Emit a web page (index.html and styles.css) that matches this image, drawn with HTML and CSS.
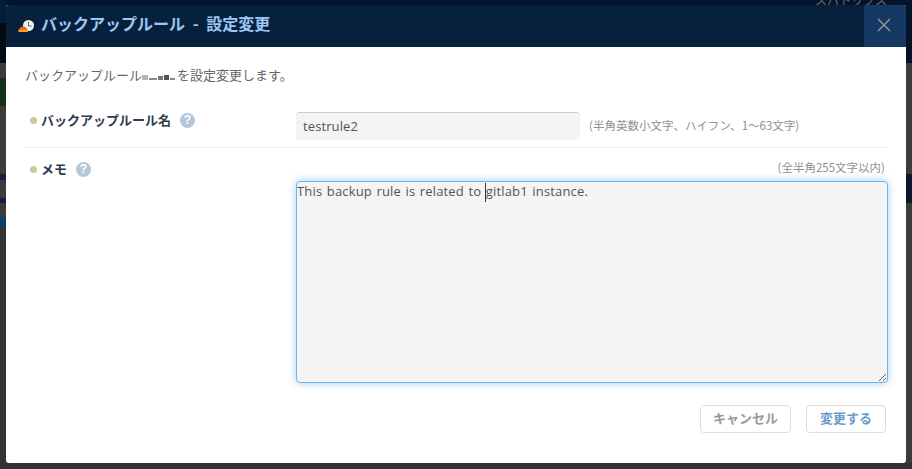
FILE: index.html
```html
<!DOCTYPE html>
<html lang="ja">
<head>
<meta charset="utf-8">
<title>バックアップルール - 設定変更</title>
<link rel="stylesheet" href="styles.css">
</head>
<body>
<div class="backdrop">
  <div class="strip">
    <div class="band l-navy"></div>
    <div class="band l-black"></div>
    <div class="band l-grey1"></div>
    <div class="band l-green"></div>
    <div class="band l-grey2"></div>
    <div class="band l-stripe1"></div>
    <div class="band l-grey3"></div>
    <div class="band l-stripe2"></div>
    <div class="band l-grey4"></div>
    <div class="band l-blue"></div>
  </div>
  <div class="strip">
    <div class="band r-dark"></div>
    <div class="band r-grey1"></div>
    <div class="band r-navy"></div>
    <div class="band r-grey2"></div>
  </div>
</div>
<span class="bg-text">スパトリクス</span>
<main class="modal">
  <header class="modal-head">
    <svg class="head-icon" width="24" height="24" viewBox="0 0 24 24" aria-hidden="true">
      <circle cx="12.5" cy="10.5" r="5.5" fill="#f2f2f2"/>
      <path d="M12.5 7V11H15.5" fill="none" stroke="#5b5f66" stroke-width="1"/>
      <path d="M2 17C2.2 14 4.5 11.5 7.5 11.5C10 11.5 11.8 14 12 17Z" fill="#ef6f18"/>
      <rect x="3.5" y="15" width="8" height="2" fill="#f9a825"/>
    </svg>
    <h1 class="modal-title">バックアップルール - 設定変更</h1>
    <button class="close" aria-label="閉じる">
      <svg width="14" height="14" viewBox="0 0 14 14"><path d="M1 1L13 13M13 1L1 13" stroke="#8c949c" stroke-width="1.5" fill="none"/></svg>
    </button>
  </header>
  <section class="modal-body">
    <p class="intro">バックアップルール<span class="mask"><i></i><i></i><i></i><i></i><i></i></span>を設定変更します。</p>
    <div class="row row-name">
      <div class="label"><span class="dot"></span><b>バックアップルール名</b><span class="help">?</span></div>
      <div class="field-line">
        <input class="input" value="testrule2" readonly>
        <span class="hint">(半角英数小文字、ハイフン、1～63文字)</span>
      </div>
    </div>
    <div class="row row-memo">
      <div class="label"><span class="dot"></span><b>メモ</b><span class="help">?</span></div>
      <div class="memo-field">
        <div class="hint hint-right">(全半角255文字以内)</div>
        <div class="textarea-wrap">
          <textarea class="textarea">This backup rule is related to gitlab1 instance.</textarea>
          <span class="caret"></span>
        </div>
      </div>
    </div>
    <div class="actions">
      <button class="btn btn-cancel">キャンセル</button>
      <button class="btn btn-ok">変更する</button>
    </div>
  </section>
</main>
</body>
</html>
```
FILE: styles.css
```css
* { box-sizing: border-box; }
html, body { margin: 0; height: 100%; }
body {
  width: 912px;
  height: 469px;
  position: relative;
  overflow: hidden;
  background: #333;
  font-family: "Noto Sans CJK JP", "Noto Sans", sans-serif;
}
.backdrop {
  position: absolute;
  inset: 0;
  display: flex;
  justify-content: space-between;
  background: linear-gradient(#03152e 0 5px, transparent 5px);
}
.strip { width: 6px; height: 463px; display: flex; flex-direction: column; }
.band { flex: none; background: #3b3b3b; }
.l-navy { height: 23px; background: #041c3a; }
.l-black { height: 40px; background: #030b14; }
.l-grey1 { height: 15px; }
.l-green { height: 28px; background: #13341a; }
.l-grey2 { height: 68px; }
.l-stripe1 { height: 6px; background: #14233a; }
.l-grey3 { height: 18px; }
.l-stripe2 { height: 5px; background: #14233a; }
.l-grey4 { height: 14px; }
.l-blue { height: 12px; background: #0f3d63; }
.r-dark { height: 63px; background: #04122a; }
.r-grey1 { height: 111px; }
.r-navy { height: 29px; background: #0c1a2d; }
.r-grey2 { flex: 1; }
.bg-text {
  position: absolute;
  top: -9px;
  left: 815px;
  font-size: 12px;
  line-height: 18px;
  color: #6a6a6a;
  white-space: nowrap;
}
.modal {
  position: absolute;
  left: 6px;
  top: 5px;
  width: 900px;
  height: 458px;
  background: #fff;
  border-radius: 3px;
  overflow: hidden;
  display: flex;
  flex-direction: column;
}
.modal-head {
  flex: none;
  height: 42px;
  background: #07213d;
  display: flex;
  align-items: center;
  padding-left: 10px;
}
.head-icon { flex: none; margin-top: 1px; }
.modal-title {
  margin: 0 0 6px 1px;
  flex: 1;
  font-size: 16px;
  font-weight: 700;
  word-spacing: 4px;
  color: #9fc5f2;
  line-height: 36px;
  white-space: nowrap;
}
.close {
  flex: none;
  width: 42px;
  height: 42px;
  border: 0;
  background: #153862;
  padding: 0 2px 2px 0;
  display: flex;
  align-items: center;
  justify-content: center;
}
.modal-body { flex: 1; display: flex; flex-direction: column; padding: 0 20px; }
.intro {
  margin: 18px 0 0 -1px;
  font-size: 13px;
  line-height: 20px;
  color: #666;
  display: flex;
  align-items: center;
  white-space: nowrap;
}
.mask { display: inline-flex; align-items: flex-end; gap: 1px; width: 35px; height: 6px; margin-top: 3px; }
.mask i { display: block; width: 6px; height: 2px; background: #666; }
.mask i:nth-child(1) { background: #b5b5b5; height: 5px; }
.mask i:nth-child(2) { background: #888; width: 8px; }
.mask i:nth-child(3) { height: 4px; width: 5px; background: #777; }
.mask i:nth-child(4) { height: 5px; width: 5px; background: #555; }
.mask i:nth-child(5) { height: 2px; width: 5px; background: #888; }
.row { display: flex; }
.row-name {
  height: 36px;
  margin-top: 27px;
  border-bottom: 1px solid #eee;
}
.label {
  flex: none;
  width: 270px;
  display: flex;
  align-items: flex-start;
  padding-left: 4px;
  color: #2f3b4d;
  font-size: 13px;
  line-height: 16px;
}
.label b { font-weight: 700; }
.dot { width: 7px; height: 7px; border-radius: 50%; background: #cdc79b; margin: 5px 4px 0 0; flex: none; }
.help {
  flex: none;
  width: 15px;
  height: 15px;
  margin: 1px 0 0 9px;
  border-radius: 50%;
  background: #b4c7dd;
  color: #fff;
  font: 700 12px/15px "Liberation Sans", sans-serif;
  text-align: center;
}
.field-line { display: flex; align-items: center; height: 28px; }
.input {
  width: 284px;
  height: 28px;
  padding: 0 7px 2px;
  border: 0;
  border-top: 1px solid #ccc;
  border-radius: 4px;
  background: #f4f4f4;
  color: #555;
  font: 13px "Open Sans", "Noto Sans", sans-serif;
  letter-spacing: .1px;
  outline: none;
}
.hint { font-size: 11.5px; color: #909090; line-height: 14px; white-space: nowrap; }
.field-line .hint { margin: 0 0 2px 9px; }
.row-memo { padding-top: 13px; }
.memo-field { width: 592px; display: flex; flex-direction: column; }
.hint-right { text-align: right; padding-right: 3px; height: 21px; margin-top: -1px; }
.textarea-wrap { position: relative; height: 202px; }
.textarea {
  display: block;
  width: 592px;
  height: 202px;
  padding: 0;
  border: 1px solid #6cb4ee;
  border-radius: 4px;
  background: #f4f4f4;
  color: #555;
  font: 13px/18px "Open Sans", "Noto Sans", sans-serif;
  word-spacing: 1px;
  letter-spacing: .16px;
  outline: none;
  box-shadow: 0 0 8px rgba(102, 175, 233, .6);
}
.caret { position: absolute; left: 189px; top: 2px; width: 1px; height: 19px; background: #333; }
.actions { display: flex; justify-content: flex-end; gap: 15px; margin-top: 22px; }
.btn {
  height: 28px;
  border: 1px solid #dcdcdc;
  border-radius: 4px;
  background: #fff;
  font: 700 13px "Noto Sans CJK JP", sans-serif;
  padding: 0 0 3px;
}
.btn-cancel { width: 91px; color: #999; }
.btn-ok { width: 80px; color: #6a9bc9; }
```
